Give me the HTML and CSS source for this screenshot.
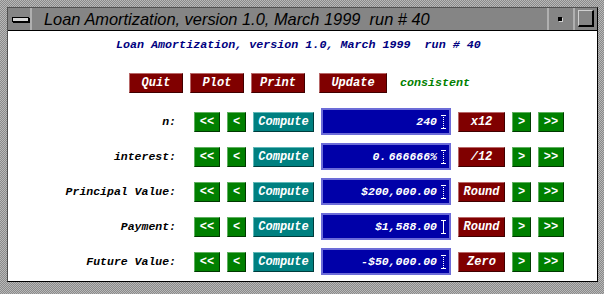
FILE: index.html
```html
<!DOCTYPE html>
<html>
<head>
    <title>Loan Amortization</title>
    <link rel="stylesheet" href="styles.css">
</head>
<body>
<div class="window">
    <div class="frame">
        <div class="titlebar">
            <div class="tb-menu"><span class="menu-bar"></span></div>
            <div class="tb-title">Loan Amortization, version 1.0, March 1999&nbsp; run # 40</div>
            <div class="tb-min"><span class="min-dot"></span></div>
            <div class="tb-max"><span class="max-box"></span></div>
        </div>
        <div class="content">
            <div class="heading">Loan Amortization, version 1.0, March 1999&nbsp; run # 40</div>

            <div class="actions">
                <button class="btn red act">Quit</button>
                <button class="btn red act">Plot</button>
                <button class="btn red act">Print</button>
                <button class="btn red act update">Update</button>
                <span class="status">consistent</span>
            </div>

            <div class="row">
                <span class="row-label">n:</span>
                <button class="btn green dbl">&lt;&lt;</button>
                <button class="btn green sgl">&lt;</button>
                <button class="btn teal compute">Compute</button>
                <div class="field"><span class="value">240</span><span class="cursor"></span></div>
                <button class="btn red op">x12</button>
                <button class="btn green sgl">&gt;</button>
                <button class="btn green dbl">&gt;&gt;</button>
            </div>
            <div class="row">
                <span class="row-label">interest:</span>
                <button class="btn green dbl">&lt;&lt;</button>
                <button class="btn green sgl">&lt;</button>
                <button class="btn teal compute">Compute</button>
                <div class="field"><span class="value">0.&thinsp;666666%</span><span class="cursor"></span></div>
                <button class="btn red op">/12</button>
                <button class="btn green sgl">&gt;</button>
                <button class="btn green dbl">&gt;&gt;</button>
            </div>
            <div class="row">
                <span class="row-label">Principal Value:</span>
                <button class="btn green dbl">&lt;&lt;</button>
                <button class="btn green sgl">&lt;</button>
                <button class="btn teal compute">Compute</button>
                <div class="field"><span class="value">$200,000.00</span><span class="cursor"></span></div>
                <button class="btn red op">Round</button>
                <button class="btn green sgl">&gt;</button>
                <button class="btn green dbl">&gt;&gt;</button>
            </div>
            <div class="row">
                <span class="row-label">Payment:</span>
                <button class="btn green dbl">&lt;&lt;</button>
                <button class="btn green sgl">&lt;</button>
                <button class="btn teal compute">Compute</button>
                <div class="field"><span class="value">$1,588.00</span><span class="cursor solid"></span></div>
                <button class="btn red op">Round</button>
                <button class="btn green sgl">&gt;</button>
                <button class="btn green dbl">&gt;&gt;</button>
            </div>
            <div class="row">
                <span class="row-label">Future Value:</span>
                <button class="btn green dbl">&lt;&lt;</button>
                <button class="btn green sgl">&lt;</button>
                <button class="btn teal compute">Compute</button>
                <div class="field"><span class="value">-$50,000.00</span><span class="cursor"></span></div>
                <button class="btn red op">Zero</button>
                <button class="btn green sgl">&gt;</button>
                <button class="btn green dbl">&gt;&gt;</button>
            </div>
        </div>
    </div>
</div>
</body>
</html>
```

FILE: styles.css
```css
body {
    margin: 0;
    background: #fff;
}
.window {
    width: 604px;
    height: 294px;
    box-sizing: border-box;
    padding: 7px 6px 12px 7px;
    background: repeating-conic-gradient(#8a8a8a 0 25%, #b8b8b8 0 50%) 0 0 / 2px 2px;
}
.frame {
    height: 100%;
    box-sizing: border-box;
    border: 1px solid #000;
    border-top-color: #505050;
    border-left-color: #505050;
    display: flex;
    flex-direction: column;
}
.titlebar {
    height: 22px;
    border-bottom: 1px solid #000;
    background: #858585;
    display: flex;
    align-items: stretch;
}
.tb-menu {
    width: 22px;
    border-right: 2px solid #b0b0b0;
    position: relative;
}
.menu-bar {
    position: absolute;
    left: 4px;
    top: 9px;
    width: 15px;
    height: 3px;
    background: #d8d8d8;
    border: 1px solid #000;
    box-shadow: 1px 1px 0 #000;
}
.tb-title {
    flex: 1;
    padding-left: 12px;
    font-family: "Liberation Sans", Arial, sans-serif;
    font-style: italic;
    font-size: 16.4px;
    line-height: 22px;
    color: #000;
    white-space: nowrap;
}
.tb-min {
    width: 24px;
    border-left: 2px solid #b0b0b0;
    position: relative;
}
.min-dot {
    position: absolute;
    left: 9px;
    top: 9px;
    width: 4px;
    height: 4px;
    background: #000;
    box-shadow: 1px 1px 0 #d0d0d0;
}
.tb-max {
    width: 22px;
    border-left: 2px solid #b0b0b0;
    position: relative;
}
.max-box {
    position: absolute;
    left: 3px;
    top: 2px;
    width: 13px;
    height: 14px;
    border: 1px solid #d0d0d0;
    border-right: 2px solid #000;
    border-bottom: 2px solid #000;
}
.content {
    flex: 1;
    background: #fff;
    padding-top: 7px;
}
.heading {
    padding-left: 108px;
    height: 14px;
    line-height: 14px;
    font-family: "Liberation Mono", "Courier New", monospace;
    font-weight: bold;
    font-style: italic;
    font-size: 11.7px;
    color: #000080;
    white-space: nowrap;
}
.actions {
    margin-top: 21px;
    padding-left: 121px;
    display: flex;
    align-items: center;
    gap: 7px;
}
.btn {
    height: 20px;
    box-sizing: border-box;
    padding: 0;
    border: 1px solid;
    font-family: "Liberation Mono", "Courier New", monospace;
    font-weight: bold;
    font-style: italic;
    font-size: 12px;
    color: #fff;
    text-align: center;
    white-space: nowrap;
}
.red {
    background: #800000;
    border-color: #b86868 #400000 #400000 #b86868;
}
.green {
    background: #008000;
    border-color: #60b060 #003800 #003800 #60b060;
}
.teal {
    background: #008080;
    border-color: #60b8b8 #003c3c #003c3c #60b8b8;
}
.act {
    width: 54px;
}
.act.update {
    width: 68px;
    margin-left: 7px;
}
.status {
    margin-left: 6px;
    font-family: "Liberation Mono", "Courier New", monospace;
    font-weight: bold;
    font-style: italic;
    font-size: 11.7px;
    color: #008000;
}
.row {
    margin-top: 11px;
    height: 35px;
    display: flex;
    align-items: center;
    gap: 7px;
}
.row + .row {
    margin-top: 0;
}
.row-label {
    width: 168px;
    margin-right: 11px;
    text-align: right;
    font-family: "Liberation Mono", "Courier New", monospace;
    font-weight: bold;
    font-style: italic;
    font-size: 11.5px;
    color: #000;
    white-space: nowrap;
}
.dbl {
    width: 26px;
}
.sgl {
    width: 19px;
}
.compute {
    width: 61px;
}
.op {
    width: 47px;
}
.field {
    width: 130px;
    height: 27px;
    box-sizing: border-box;
    border: 2px solid #6c6cd8;
    background: #0000a8;
    display: flex;
    align-items: center;
    justify-content: flex-end;
    padding-right: 3px;
}
.value {
    font-family: "Liberation Mono", "Courier New", monospace;
    font-style: italic;
    font-weight: bold;
    font-size: 11.5px;
    color: #fff;
    white-space: nowrap;
}
.cursor {
    width: 5px;
    height: 14px;
    margin-left: 4px;
    box-sizing: border-box;
    background:
        linear-gradient(#fff, #fff) top / 5px 1px no-repeat,
        linear-gradient(#fff, #fff) bottom / 5px 1px no-repeat,
        repeating-linear-gradient(#fff 0 1px, transparent 1px 2px) center / 1px 100% no-repeat;
}
.cursor.solid {
    background:
        linear-gradient(#fff, #fff) top / 5px 1px no-repeat,
        linear-gradient(#fff, #fff) bottom / 5px 1px no-repeat,
        linear-gradient(#fff, #fff) center / 1px 100% no-repeat;
}
```
